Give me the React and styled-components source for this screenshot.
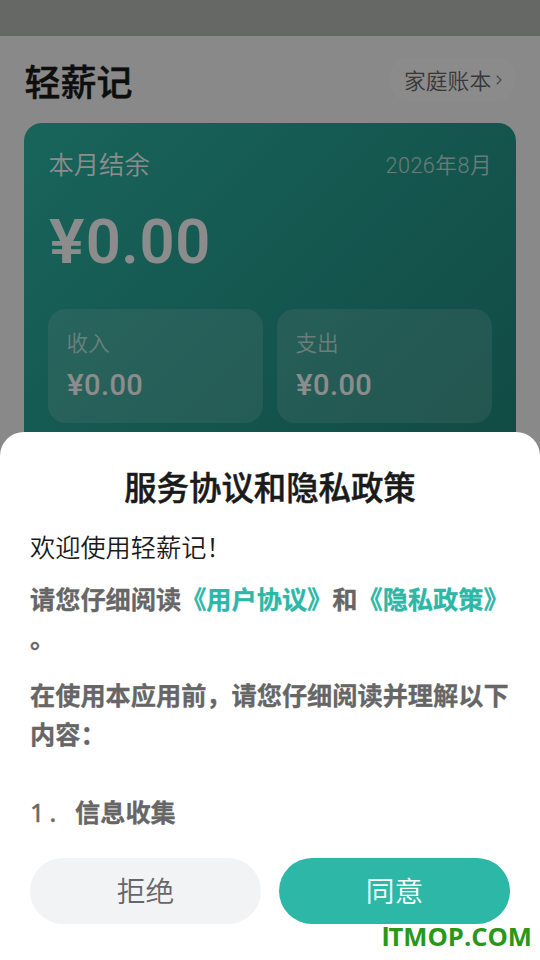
import styled, { createGlobalStyle } from 'styled-components';

const GlobalStyle = createGlobalStyle`
  * {
    box-sizing: border-box;
  }
  body {
    margin: 0;
    overflow: hidden;
    font-family: Roboto, 'Noto Sans CJK SC', sans-serif;
  }
  h1, h2, p {
    margin: 0;
  }
`;

const stats = [
  { label: '收入', value: '0.00' },
  { label: '支出', value: '0.00' },
];

const BalanceCard = () => {
  return (
    <Card>
      <CardHead>
        <CardTitle>本月结余</CardTitle>
        <Month>2026年8月</Month>
      </CardHead>
      <Balance>
        <Yen>¥</Yen>0.00
      </Balance>
      <Stats>
        {stats.map((stat) => (
          <Stat key={stat.label}>
            <StatLabel>{stat.label}</StatLabel>
            <StatValue>
              <Yen>¥</Yen>
              {stat.value}
            </StatValue>
          </Stat>
        ))}
      </Stats>
    </Card>
  );
};

const PolicySheet = () => {
  return (
    <Sheet>
      <SheetTitle>服务协议和隐私政策</SheetTitle>
      <Welcome>欢迎使用轻薪记！</Welcome>
      <Paragraph $top={13}>
        请您仔细阅读<PolicyLink>《用户协议》</PolicyLink>和
        <PolicyLink>《隐私政策》</PolicyLink>
        <br />。
      </Paragraph>
      <Paragraph $top={18}>
        在使用本应用前，请您仔细阅读并理解以下
        <br />
        内容：
      </Paragraph>
      <Paragraph $top={39}>
        <Digit>1</Digit>
        <Digit $dot>.</Digit>
        信息收集
      </Paragraph>
      <Actions>
        <Button type='button'>拒绝</Button>
        <Button type='button' $primary>
          同意
        </Button>
      </Actions>
    </Sheet>
  );
};

const App = () => {
  return (
    <>
      <GlobalStyle />
      <Screen>
        <StatusBar />
        <Header>
          <AppName>轻薪记</AppName>
          <BookButton type='button'>
            家庭账本
            <svg width='6' height='10' viewBox='0 0 6 10' fill='none'>
              <path d='M0.8 0.7L5 5L0.8 9.3' stroke='#858585' strokeWidth='1.3' />
            </svg>
          </BookButton>
        </Header>
        <BalanceCard />
      </Screen>
      <Overlay>
        <PolicySheet />
        <Watermark>
          <span>I</span>TMOP.COM
        </Watermark>
      </Overlay>
    </>
  );
};

const Screen = styled.main`
  height: 960px;
  background: #f7faf8;
`;

const StatusBar = styled.div`
  height: 36px;
  background: #babdbb;
`;

const Header = styled.header`
  display: flex;
  align-items: center;
  justify-content: space-between;
  height: 87px;
  padding: 0 24px;
`;

const AppName = styled.h1`
  font-size: 36px;
  line-height: 52px;
  font-weight: 500;
  -webkit-text-stroke: 0.5px currentColor;
  color: #1a1a1a;
  padding: 8px 0 0 0.5px;
`;

const BookButton = styled.button`
  display: flex;
  align-items: center;
  gap: 5px;
  width: 127px;
  height: 45px;
  padding: 0 0 0 15px;
  border: none;
  border-radius: 23px;
  background: #fffdfd;
  font-family: inherit;
  font-size: 21.8px;
  font-weight: 350;
  color: #666;
  white-space: nowrap;
`;

const Card = styled.section`
  height: 330px;
  margin: 0 24px;
  padding: 22px 24px 0;
  border-radius: 18px;
  background: linear-gradient(135deg, #2db7a7 0%, #1f887c 100%);
  color: #fff;
`;

const CardHead = styled.div`
  display: flex;
  align-items: center;
  justify-content: space-between;
  height: 36px;
`;

const CardTitle = styled.span`
  padding-left: 0.5px;
  font-size: 25.3px;
  font-weight: 350;
`;

const Month = styled.span`
  font-size: 21.6px;
  font-weight: 350;
  letter-spacing: 0.5px;
  opacity: 0.7;
`;

const Yen = styled.span`
  display: inline-block;
  margin-right: 0.06em;
  transform: scaleX(1.08);
  transform-origin: left;
`;

const Balance = styled.div`
  margin-top: 21px;
  height: 78px;
  padding-left: 0.5px;
  font-size: 61.5px;
  line-height: 80px;
  font-weight: 600;
  letter-spacing: 0.6px;
`;

const Stats = styled.div`
  display: grid;
  grid-template-columns: 1fr 1fr;
  gap: 14px;
  margin-top: 29px;
`;

const Stat = styled.div`
  height: 114px;
  padding: 18px 18.5px 0;
  border-radius: 18px;
  background: rgba(255, 255, 255, 0.15);
`;

const StatLabel = styled.div`
  font-size: 21.6px;
  line-height: 34px;
  font-weight: 350;
  color: rgba(255, 255, 255, 0.7);
`;

const StatValue = styled.div`
  margin-top: 6px;
  font-size: 29px;
  line-height: 36px;
  font-weight: 500;
  letter-spacing: 0.4px;
`;

const Overlay = styled.div`
  position: fixed;
  inset: 0;
  display: flex;
  flex-direction: column;
  justify-content: flex-end;
  background: rgba(0, 0, 0, 0.45);
`;

const Sheet = styled.section`
  height: 528px;
  padding: 30px 30px 0;
  border-radius: 24px 24px 0 0;
  background: #fff;
  color: #666;
  font-family: 'Noto Sans CJK SC', sans-serif;
`;

const SheetTitle = styled.h2`
  font-size: 32.4px;
  line-height: 48px;
  font-weight: 500;
  -webkit-text-stroke: 0.5px currentColor;
  text-align: center;
  color: #1a1a1a;
`;

const Welcome = styled.p`
  margin-top: 17px;
  font-size: 25.2px;
  line-height: 39px;
  font-weight: 350;
  color: #1a1a1a;
`;

const Paragraph = styled.p`
  margin-top: ${({ $top }) => $top}px;
  font-size: 25.2px;
  line-height: 39px;
  font-weight: 700;
  -webkit-text-stroke: 0.3px currentColor;
  white-space: nowrap;
`;

const PolicyLink = styled.span`
  color: #2db7a7;
`;

const Digit = styled.span`
  display: inline-block;
  width: ${({ $dot }) => ($dot ? '30px' : '15px')};
  padding-left: ${({ $dot }) => ($dot ? '4.5px' : '0')};
  font-family: 'Noto Sans', sans-serif;
  font-weight: 400;
  -webkit-text-stroke: 0.5px currentColor;
`;

const Actions = styled.div`
  display: grid;
  grid-template-columns: 1fr 1fr;
  gap: 18px;
  margin-top: 26px;
`;

const Button = styled.button`
  height: 66px;
  padding: 0 0 2px;
  border: none;
  border-radius: 33px;
  background: ${({ $primary }) => ($primary ? '#2db7a7' : '#f1f3f5')};
  color: ${({ $primary }) => ($primary ? '#fff' : '#666')};
  font-family: inherit;
  font-size: 28.8px;
  line-height: 42px;
  font-weight: 350;
`;

/* lies over the lower edge of the buttons */
const Watermark = styled.div`
  position: absolute;
  right: 8px;
  bottom: 6px;
  font-family: 'Open Sans', sans-serif;
  font-size: 25.6px;
  line-height: 34px;
  font-weight: 700;
  color: #29981a;

  span {
    margin-right: -1px;
    font-family: Lato, sans-serif;
    font-weight: 900;
  }
`;

export default App;
